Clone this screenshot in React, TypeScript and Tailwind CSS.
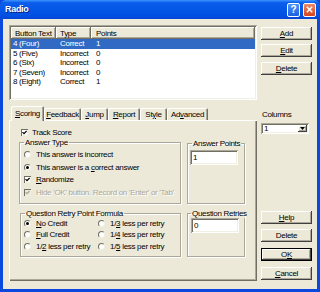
import React from 'react';

const raised = 'shadow-[inset_-1px_-1px_#404040,inset_1px_1px_#ffffff,inset_-2px_-2px_#ACA899]';
const sunken = 'shadow-[inset_1px_1px_#ACA899,inset_-1px_-1px_#ffffff,inset_2px_2px_#716F64,inset_-2px_-2px_#F1EFE2]';
const etched = 'border border-[#ACA899] shadow-[inset_1px_1px_#ffffff,1px_1px_#ffffff] min-w-0';

const rows = [
  ['4 (Four)', 'Correct', '1'],
  ['5 (Five)', 'Incorrect', '0'],
  ['6 (Six)', 'Incorrect', '0'],
  ['7 (Seven)', 'Incorrect', '0'],
  ['8 (Eight)', 'Correct', '1'],
];

const tabs = [
  { pre: '', u: 'S', post: 'coring', w: 'w-[33px]', on: true },
  { pre: '', u: 'F', post: 'eedback', w: 'w-[37px]' },
  { pre: '', u: 'J', post: 'ump', w: 'w-[27px]' },
  { pre: '', u: 'R', post: 'eport', w: 'w-[32px]' },
  { pre: 'St', u: 'y', post: 'le', w: 'w-[27px]' },
  { pre: 'Ad', u: 'v', post: 'anced', w: 'w-[41px]' },
];

const Check = ({ disabled = false }: { disabled?: boolean }) => (
  <div
    className={`w-[7px] h-[7px] flex-none flex items-center justify-center shadow-[inset_1px_1px_#716F64,inset_-1px_-1px_#F1EFE2] ${
      disabled ? 'bg-[#ECE9D8]' : 'bg-white'
    }`}
  >
    <svg width="5" height="5" viewBox="0 0 5 5">
      <path d="M0.5 2.2 L2 3.7 L4.6 1" stroke={disabled ? '#ACA899' : '#000'} strokeWidth="1.2" fill="none" />
    </svg>
  </div>
);

const Radio = ({ on = false }: { on?: boolean }) => (
  <div className="w-[7px] h-[7px] flex-none rounded-full bg-white border border-t-[#716F64] border-l-[#716F64] border-r-[#F1EFE2] border-b-[#F1EFE2] flex items-center justify-center">
    {on && <div className="w-[3px] h-[3px] rounded-full bg-black" />}
  </div>
);

const Btn = ({ children, def = false }: { children: React.ReactNode; def?: boolean }) => (
  <div
    className={`h-[13px] w-[51px] flex items-center justify-center bg-[#ECE9D8] ${raised} ${
      def ? 'border border-black' : ''
    }`}
  >
    {children}
  </div>
);

export default function App() {
  return (
    <div className="w-[320px] h-[292px] flex flex-col bg-[#0B48DD] font-['Liberation_Sans',Arial,sans-serif] text-[8px] leading-[9px] tracking-[-0.3px] text-black select-none overflow-hidden">
      {/* Title bar */}
      <div className="h-[19px] flex-none flex items-center pl-[5px] pr-[4px] rounded-t-[6px] bg-[linear-gradient(#3D95FF_0%,#0A5EEA_14%,#0558E8_45%,#0050E4_80%,#0546D6_100%)]">
        <span className="text-white font-bold text-[9px] tracking-[-0.3px] [text-shadow:1px_1px_#0A1E8C]">Radio</span>
        <div className="ml-auto flex gap-[3px]">
          <div className="w-[13px] h-[14px] rounded-[2px] border border-white bg-[linear-gradient(#4C94F6,#1C5FE2)] flex items-center justify-center text-white font-bold text-[10px] leading-[10px] tracking-normal">
            ?
          </div>
          <div className="w-[13px] h-[14px] rounded-[2px] border border-white bg-[linear-gradient(#EB8A68,#D5441C)] flex items-center justify-center">
            <svg width="7" height="7" viewBox="0 0 7 7">
              <path d="M0.8 0.8 L6.2 6.2 M6.2 0.8 L0.8 6.2" stroke="#fff" strokeWidth="1.5" />
            </svg>
          </div>
        </div>
      </div>

      {/* Client area */}
      <div className="flex-1 mx-[3px] mb-[3px] bg-[#ECE9D8] flex">
        {/* Left column */}
        <div className="ml-[6px] mt-[6px] w-[248px] flex flex-col">
          {/* List view */}
          <div className={`h-[75px] bg-white p-[2px] flex flex-col ${sunken}`}>
            <div className="h-[12px] flex-none flex bg-[#ECE9D8]">
              <div className="w-[45px] pl-[4px] flex items-center shadow-[inset_-1px_-1px_#716F64,inset_1px_1px_#ffffff,inset_-2px_-2px_#ACA899]">Button Text</div>
              <div className="w-[35px] pl-[4px] flex items-center shadow-[inset_-1px_-1px_#716F64,inset_1px_1px_#ffffff,inset_-2px_-2px_#ACA899]">Type</div>
              <div className="flex-1 pl-[5px] flex items-center shadow-[inset_-1px_-1px_#716F64,inset_1px_1px_#ffffff,inset_-2px_-2px_#ACA899]">Points</div>
            </div>
            {rows.map((r, i) => (
              <div key={i} className={`h-[9.5px] flex-none flex items-center ${i === 0 ? 'bg-[#316AC5] text-white' : ''}`}>
                <div className="w-[45px] pl-[2px]">{r[0]}</div>
                <div className="w-[35px] pl-[4px]">{r[1]}</div>
                <div className="flex-1 pl-[5px]">{r[2]}</div>
              </div>
            ))}
          </div>

          {/* Tabs */}
          <div className="mt-[6px] h-[14px] flex-none flex items-end pl-[2px]">
            {tabs.map((t, i) => (
              <div
                key={i}
                className={`${t.w} flex items-center justify-center rounded-t-[2px] bg-[#ECE9D8] shadow-[inset_1px_1px_#ffffff,inset_-1px_0_#716F64,inset_-2px_0_#ACA899] ${
                  t.on ? 'h-[15px] -mb-[1px] relative z-10' : 'h-[12px]'
                }`}
              >
                {t.pre}
                <u>{t.u}</u>
                {t.post}
              </div>
            ))}
          </div>

          {/* Tab panel */}
          <div className="h-[161px] flex-none flex flex-col bg-[#ECE9D8] shadow-[inset_1px_1px_#ffffff,inset_-1px_-1px_#716F64,inset_-2px_-2px_#ACA899]">
            <div className="mt-[8px] ml-[12px] h-[9px] flex items-center gap-[4px]">
              <Check />
              <span>Track Score</span>
            </div>

            <div className="mt-[0.5px] flex items-start">
              <fieldset className={`ml-[10px] w-[162px] h-[66px] ${etched}`}>
                <legend className="ml-[4px] px-[1px] leading-[9px] whitespace-nowrap">Answer Type</legend>
                <div className="pt-[2px] flex flex-col">
                  <div className="h-[12.5px] pl-[4px] flex items-center gap-[5px]">
                    <Radio />
                    <span>This answer is incorrect</span>
                  </div>
                  <div className="h-[12.5px] pl-[4px] flex items-center gap-[5px]">
                    <Radio on />
                    <span>
                      This answer is a <u>c</u>orrect answer
                    </span>
                  </div>
                  <div className="h-[12.5px] pl-[4px] flex items-center gap-[5px]">
                    <Check />
                    <span>
                      <u>R</u>andomize
                    </span>
                  </div>
                  <div className="h-[12.5px] pl-[4px] flex items-center gap-[5px]">
                    <Check disabled />
                    <span className="whitespace-nowrap text-[#ACA899] [text-shadow:1px_1px_#ffffff]">
                      Hide 'OK' button. Record on 'Enter' or 'Tab'
                    </span>
                  </div>
                </div>
              </fieldset>

              <fieldset className={`ml-[6px] mt-[1px] w-[58px] h-[65px] ${etched}`}>
                <legend className="ml-[4px] px-[1px] leading-[9px] whitespace-nowrap">Answer Points</legend>
                <div className="pl-[2px] pt-[2.5px]">
                  <div className={`w-[48px] h-[15px] bg-white pl-[3px] flex items-center ${sunken}`}>1</div>
                </div>
              </fieldset>
            </div>

            <div className="mt-[5px] flex items-start">
              <fieldset className={`ml-[11px] w-[161px] h-[48px] ${etched}`}>
                <legend className="ml-[4px] px-[1px] leading-[9px] whitespace-nowrap">Question Retry Point Formula</legend>
                <div className="pl-[3px] grid grid-cols-[74px_1fr]">
                  <div className="h-[11.5px] flex items-center gap-[5px]">
                    <Radio on />
                    <span>
                      <u>N</u>o Credit
                    </span>
                  </div>
                  <div className="h-[11.5px] flex items-center gap-[5px]">
                    <Radio />
                    <span>
                      1/<u>3</u> less per retry
                    </span>
                  </div>
                  <div className="h-[11.5px] flex items-center gap-[5px]">
                    <Radio />
                    <span>
                      <u>F</u>ull Credit
                    </span>
                  </div>
                  <div className="h-[11.5px] flex items-center gap-[5px]">
                    <Radio />
                    <span>
                      1/<u>4</u> less per retry
                    </span>
                  </div>
                  <div className="h-[11.5px] flex items-center gap-[5px]">
                    <Radio />
                    <span>
                      1/<u>2</u> less per retry
                    </span>
                  </div>
                  <div className="h-[11.5px] flex items-center gap-[5px]">
                    <Radio />
                    <span>
                      1/<u>5</u> less per retry
                    </span>
                  </div>
                </div>
              </fieldset>

              <fieldset className={`ml-[6px] w-[58px] h-[48px] ${etched}`}>
                <legend className="ml-[3px] px-[1px] leading-[9px] whitespace-nowrap">Question Retries</legend>
                <div className="pl-[3px] pt-[0.5px]">
                  <div className={`w-[48px] h-[15px] bg-white pl-[3px] flex items-center ${sunken}`}>0</div>
                </div>
              </fieldset>
            </div>
          </div>
        </div>

        {/* Right column */}
        <div className="ml-[4px] mt-[8px] w-[51px] flex flex-col">
          <Btn>
            <u>A</u>dd
          </Btn>
          <div className="mt-[4px]">
            <Btn>
              <u>E</u>dit
            </Btn>
          </div>
          <div className="mt-[5px]">
            <Btn>
              <u>D</u>elete
            </Btn>
          </div>

          <div className="mt-[35px] h-[9px] pl-[1px]">Columns</div>
          <div className={`mt-[4px] w-[48px] h-[11px] bg-white flex items-stretch p-[2px] ${sunken}`}>
            <div className="flex-1 pl-[1px] flex items-center">1</div>
            <div className={`w-[9px] bg-[#ECE9D8] flex items-center justify-center ${raised}`}>
              <svg width="5" height="3" viewBox="0 0 5 3">
                <path d="M0 0 H5 L2.5 3 Z" fill="#000" />
              </svg>
            </div>
          </div>

          <div className="mt-[77px]">
            <Btn>
              <u>H</u>elp
            </Btn>
          </div>
          <div className="mt-[5px]">
            <Btn>Delete</Btn>
          </div>
          <div className="mt-[6px]">
            <Btn def>
              O<u>K</u>
            </Btn>
          </div>
          <div className="mt-[6px]">
            <Btn>
              <u>C</u>ancel
            </Btn>
          </div>
        </div>
      </div>
    </div>
  );
}
